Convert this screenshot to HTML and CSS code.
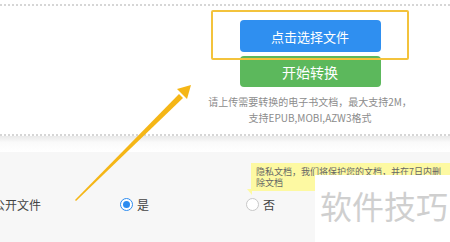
FILE: index.html
```html
<!DOCTYPE html>
<html lang="zh">
<head>
<meta charset="utf-8">
<link rel="stylesheet" href="styles.css">
</head>
<body>
<div class="page">
  <section class="upload">
    <div class="upload-inner">
      <button class="btn btn-blue">点击选择文件</button>
      <button class="btn btn-green">开始转换</button>
      <p class="hint">请上传需要转换的电子书文档，最大支持2M，<br>支持EPUB,MOBI,AZW3格式</p>
    </div>
  </section>
  <div class="shade"></div>
  <section class="options">
    <div class="row">
      <span class="label">公开文件</span>
      <label class="radio"><span class="dot checked"></span>是</label>
      <label class="radio"><span class="dot"></span>否</label>
    </div>
  </section>
  <div class="highlight"></div>
  <div class="tip">隐私文档，我们将保护您的文档，并在7日内删<br>除文档</div>
  <div class="watermark">软件技巧</div>
  <svg class="arrow" width="450" height="242" viewBox="0 0 450 242">
    <polygon points="75,200 76,201 183,98 179,94" fill="#f5b616"/>
    <polygon points="191,85 177,89 187,99" fill="#f5b616"/>
  </svg>
</div>
</body>
</html>
```
FILE: styles.css
```css
* { box-sizing: border-box; }
html, body { margin: 0; padding: 0; }
body {
  width: 450px;
  height: 242px;
  overflow: hidden;
  background: #fff;
  font-family: "Noto Sans CJK SC", "Noto Sans", sans-serif;
}
.page {
  position: relative;
  width: 450px;
  height: 242px;
  overflow: hidden;
}
.upload {
  margin-top: 4px;
  height: 132px;
  border-top: 2px dotted #d6d6d6;
  border-bottom: 2px dotted #d6d6d6;
  background: #fff;
}
.upload-inner {
  display: flex;
  flex-direction: column;
  align-items: center;
  margin-left: 170px;
  width: 280px;
  padding-top: 14px;
}
.btn {
  width: 141px;
  border: none;
  border-radius: 4px;
  color: #fff;
  font-family: "Noto Sans CJK SC", sans-serif;
  font-size: 13px;
  padding: 0;
  display: flex;
  align-items: center;
  justify-content: center;
}
.btn-blue {
  height: 32px;
  background: #2f8ff0;
}
.btn-green {
  margin-top: 4px;
  height: 31px;
  background: #5cb85c;
  font-size: 14px;
}
.hint {
  margin: 7px 0 0;
  font-size: 10px;
  line-height: 16px;
  color: #8c8c8c;
  text-align: center;
  white-space: nowrap;
}
.shade {
  height: 16px;
  background: linear-gradient(#e9e9e9, #fafafa 40%, #fff);
}
.options {
  height: 90px;
  background: #f7f7f7;
}
.row {
  display: flex;
  align-items: center;
  padding-top: 44px;
  font-size: 12px;
  color: #444;
}
.label {
  margin-left: -7px;
  width: 127px;
  white-space: nowrap;
}
.radio {
  display: flex;
  align-items: center;
  gap: 4px;
  width: 126px;
}
.dot {
  width: 13px;
  height: 13px;
  border-radius: 50%;
  border: 1px solid #c8c8c8;
  background: #fff;
  display: inline-flex;
  align-items: center;
  justify-content: center;
}
.dot.checked {
  border-color: #2d8cf0;
}
.dot.checked::after {
  content: "";
  width: 7px;
  height: 7px;
  border-radius: 50%;
  background: #2d8cf0;
}
.highlight {
  position: absolute;
  left: 211px;
  top: 10px;
  width: 198px;
  height: 50px;
  border: 2px solid #f3c33c;
  border-radius: 2px;
}
.tip {
  position: absolute;
  left: 251px;
  top: 163px;
  width: 210px;
  height: 28px;
  padding: 3px 5px;
  background: #fdf9a2;
  font-size: 9px;
  line-height: 11px;
  color: #666;
  white-space: nowrap;
}
.tip::after {
  content: "";
  position: absolute;
  left: -4px;
  bottom: -4px;
  border-left: 5px solid transparent;
  border-top: 6px solid #fdf9a2;
}
.watermark {
  position: absolute;
  left: 315px;
  top: 175px;
  width: 140px;
  height: 70px;
  background: #fff;
  font-size: 32px;
  line-height: 40px;
  padding-top: 10px;
  padding-left: 5px;
  color: #cfcfcf;
  white-space: nowrap;
}
.arrow {
  position: absolute;
  left: 0;
  top: 0;
}
```
